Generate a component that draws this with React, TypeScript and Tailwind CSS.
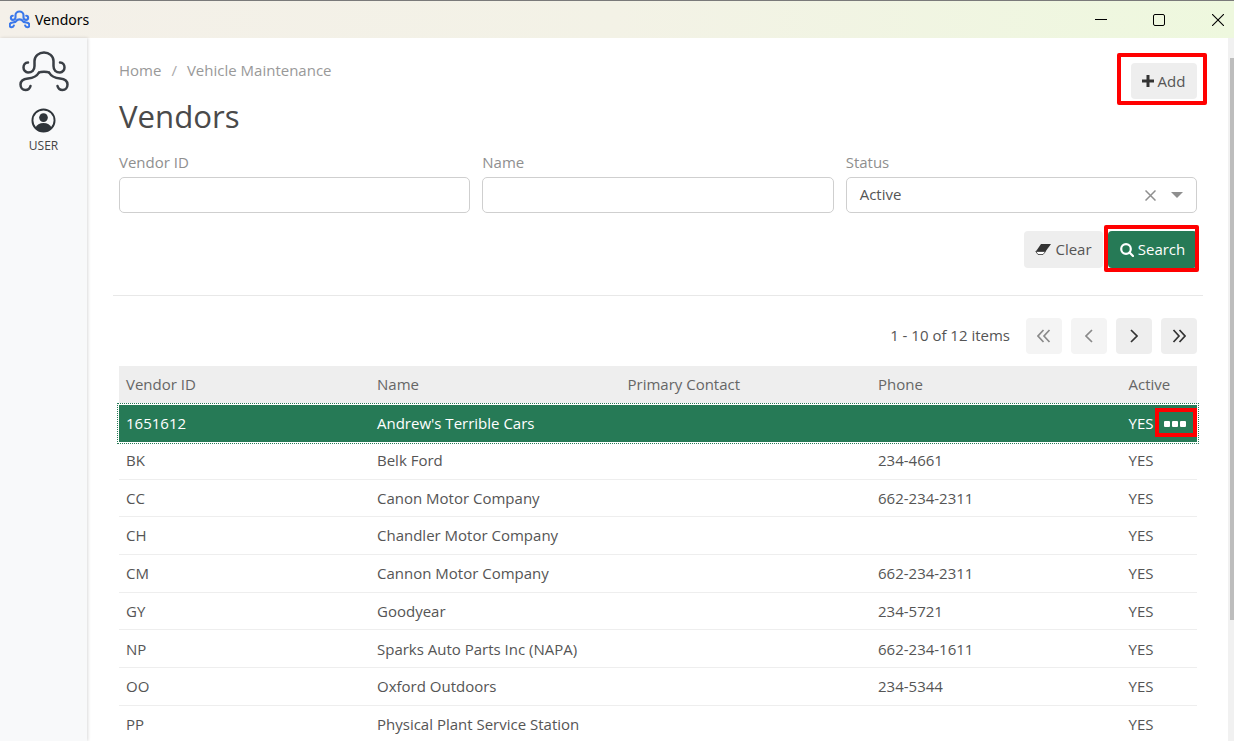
const rows = [
  { id: "BK", name: "Belk Ford", phone: "234-4661" },
  { id: "CC", name: "Canon Motor Company", phone: "662-234-2311" },
  { id: "CH", name: "Chandler Motor Company", phone: "" },
  { id: "CM", name: "Cannon Motor Company", phone: "662-234-2311" },
  { id: "GY", name: "Goodyear", phone: "234-5721" },
  { id: "NP", name: "Sparks Auto Parts Inc (NAPA)", phone: "662-234-1611" },
  { id: "OO", name: "Oxford Outdoors", phone: "234-5344" },
  { id: "PP", name: "Physical Plant Service Station", phone: "" },
];

function Octopus({ className, color, weight }: { className: string; color: string; weight: number }) {
  return (
    <svg viewBox="0 0 50 41" className={className} fill="none" stroke={color} strokeWidth={weight} strokeLinecap="round">
      {/* cabeca e bracos de cima */}
      <path d="M9 11.500C6 11.500 4.500 14 4.500 16.500C4.500 19 6.500 21.500 9 21.500C13 21.500 15.500 19 15.500 15V10C15.500 5 20 1.500 25 1.500C30 1.500 34.500 5 34.500 10V15C34.500 19 37 21.500 41 21.500C43.500 21.500 45.500 19 45.500 16.500C45.500 14 44 11.500 41 11.500" />
      {/* bracos de baixo */}
      <path d="M20 21.500C18 25 14 27 9 27.500C4.500 28 1.500 30 1.500 33.500C1.500 36.500 3.500 39 6.500 39C9 39 11 37 11.500 35" />
      <path d="M30 21.500C32 25 36 27 41 27.500C45.500 28 48.500 30 48.500 33.500C48.500 36.500 46.500 39 43.500 39C41 39 39 37 38.500 35" />
      <path d="M20 21.500C22 20.500 28 20.500 30 21.500" />
    </svg>
  );
}

function Field({ label, children }: { label: string; children?: React.ReactNode }) {
  return (
    <div className="flex-1">
      <div className="text-[15px] leading-[20px] text-[#8f8f8f] mb-[5px]">{label}</div>
      <div className="h-[36px] border border-[#cfcfcf] rounded-[5px] bg-white flex items-center px-[13px] text-[15px] text-[#555]">
        {children}
      </div>
    </div>
  );
}

function PageButton({ disabled, children }: { disabled?: boolean; children: React.ReactNode }) {
  return (
    <div className={`w-[36px] h-[36px] rounded-[4px] flex items-center justify-center ${disabled ? "bg-[#f4f4f4] text-[#8a8a8a]" : "bg-[#eeeeee] text-[#333]"}`}>
      {children}
    </div>
  );
}

function Chevron({ path, width }: { path: string; width: number }) {
  return (
    <svg viewBox={`0 0 ${width} 14`} width={width} height={14} fill="none" stroke="currentColor" strokeWidth="1.700">
      <path d={path} />
    </svg>
  );
}

const colunas = "grid grid-cols-[251px_250.5px_250.5px_250.5px_1fr] items-center";

export default function App() {
  return (
    <div className="h-screen w-full overflow-hidden flex flex-col bg-white font-['Open_Sans','Noto_Sans',sans-serif] text-[#555]">
      {/* BARRA DE TITULO */}
      <div className="h-[38px] shrink-0 border-t border-[#7a7a7a] bg-gradient-to-r from-[#f4f0e9] via-[#f3f2e6] to-[#eef8de] flex items-center justify-between">
        <div className="flex items-center">
          <Octopus className="w-[21px] h-[19px] ml-[9px] mr-[5px]" color="#3b78ea" weight={5} />
          <span className="text-[14px] text-black font-['Noto_Sans',sans-serif]">Vendors</span>
        </div>
        <div className="flex items-center">
          <div className="w-[12px] h-[1px] bg-black mr-[46px]" />
          <div className="w-[12px] h-[12px] border-[1.5px] border-black rounded-[2px] mr-[47px]" />
          <svg viewBox="0 0 12 12" className="w-[12px] h-[12px] mr-[10px]" stroke="#000" strokeWidth="1.100">
            <path d="M0 0L12 12M12 0L0 12" />
          </svg>
        </div>
      </div>

      <div className="flex-1 flex min-h-0">
        {/* MENU LATERAL */}
        <div className="w-[87px] shrink-0 bg-[#f8f9fa] shadow-[1px_0_3px_rgba(0,0,0,0.15)] flex flex-col items-center pt-[13px]">
          <Octopus className="w-[50px] h-[41px]" color="#3a3f45" weight={2.5} />
          <svg viewBox="0 0 26 26" className="w-[25px] h-[25px] mt-[16px]">
            <circle cx="13" cy="13" r="11.500" fill="none" stroke="#2f353a" strokeWidth="2" />
            <circle cx="13" cy="10" r="4.500" fill="#2f353a" />
            <path d="M4.500 20.500C6 17 9 15.500 13 15.500s7 1.500 8.500 5C19 23.500 16 24.500 13 24.500s-6-1-8.500-4z" fill="#2f353a" />
          </svg>
          <span className="text-[12px] leading-[16px] mt-[5px] text-[#444]">USER</span>
        </div>

        {/* CONTEUDO */}
        <div className="flex-1 min-w-0 pl-[26px] pr-[25px] pt-[14px]">
          <div className="flex justify-between items-start px-[6px]">
            <div>
              <div className="text-[15px] leading-[36px] text-[#999] flex">
                <span>Home</span>
                <span className="mx-[10px] text-[#aaa]">/</span>
                <span>Vehicle Maintenance</span>
              </div>
              <h1 className="text-[31.2px] leading-[44px] mt-[6px] text-[#4a4a4a]">Vendors</h1>
            </div>
            <div className="relative mt-[11px]">
              <div className="h-[36px] w-[66px] rounded-[4px] bg-[#eeeeee] text-[#555] text-[15px] flex items-center justify-center gap-[4px] pr-[1px]">
                <svg viewBox="0 0 12 12" className="w-[12px] h-[12px]" fill="#333">
                  <path d="M4.500 0h3v4.500H12v3H7.500V12h-3V7.500H0v-3h4.500z" />
                </svg>
                <span>Add</span>
              </div>
              <div className="absolute -left-[14px] -right-[10px] -top-[10px] -bottom-[6px] border-[4px] border-[#ff0000] rounded-[2px]" />
            </div>
          </div>

          {/* FILTROS */}
          <div className="flex gap-[12px] px-[6px] mt-[14px]">
            <Field label="Vendor ID" />
            <Field label="Name" />
            <Field label="Status">
              <span className="flex-1 pb-[2px]">Active</span>
              <svg viewBox="0 0 11 11" className="w-[11px] h-[11px] mr-[15px]" stroke="#8f8f8f" strokeWidth="1.500">
                <path d="M0.500 0.500L10.500 10.500M10.500 0.500L0.500 10.500" />
              </svg>
              <div className="w-0 h-0 border-x-[6px] border-x-transparent border-t-[6px] border-t-[#8f8f8f]" />
            </Field>
          </div>

          <div className="flex justify-end gap-[5px] px-[6px] mt-[18px] pb-[27px] border-b border-[#e8e8e8]">
            <div className="h-[37px] w-[79px] rounded-[4px] bg-[#eeeeee] text-[15px] flex items-center justify-center gap-[4px]">
              <svg viewBox="0 0 16 11" className="w-[16px] h-[11px]">
                <path d="M6 0H16L10.500 7.500H0.800z" fill="#333" />
                <path d="M0.800 7.500H10.500L8 10.500H3z" fill="#fff" stroke="#333" strokeWidth="0.800" />
              </svg>
              <span>Clear</span>
            </div>
            <div className="relative">
              <div className="h-[37px] w-[89px] rounded-[4px] bg-[#267a56] text-white text-[15px] flex items-center justify-center gap-[4px]">
                <svg viewBox="0 0 14 14" className="w-[14px] h-[14px]" fill="none" stroke="#fff" strokeWidth="2.200">
                  <circle cx="6" cy="6" r="4.800" />
                  <path d="M9.500 9.500L13 13" strokeLinecap="round" />
                </svg>
                <span>Search</span>
              </div>
              <div className="absolute -left-[4px] -right-[2px] -top-[6px] -bottom-[4px] border-[4px] border-[#ff0000] rounded-[2px]" />
            </div>
          </div>

          {/* PAGINACAO */}
          <div className="flex justify-end items-center gap-[9px] px-[6px] mt-[22px]">
            <span className="text-[15px] mr-[7px] pb-[2px]">1 - 10 of 12 items</span>
            <PageButton disabled><Chevron width={14} path="M6.500 1L1 7l5.500 6M12.500 1L7 7l5.500 6" /></PageButton>
            <PageButton disabled><Chevron width={8} path="M7 1L1 7l6 6" /></PageButton>
            <PageButton><Chevron width={8} path="M1 1l6 6-6 6" /></PageButton>
            <PageButton><Chevron width={14} path="M1.500 1L7 7l-5.500 6M7.500 1L13 7l-5.500 6" /></PageButton>
          </div>

          {/* TABELA */}
          <div className="mx-[6px] mt-[12px] text-[15px]">
            <div className={`h-[37px] bg-[#eeeeee] text-[#666] ${colunas}`}>
              <span className="pl-[7px]">Vendor ID</span>
              <span className="pl-[7px]">Name</span>
              <span className="pl-[7px]">Primary Contact</span>
              <span className="pl-[7px]">Phone</span>
              <span className="pl-[7px]">Active</span>
            </div>
            <div className={`relative h-[37px] mt-[2px] bg-[#267a56] text-white font-medium outline-1 outline-offset-1 outline-dotted outline-[#267a56] ${colunas}`}>
              <span className="pl-[7px] font-normal">1651612</span>
              <span className="pl-[7px]">Andrew's Terrible Cars</span>
              <span />
              <span />
              <span className="pl-[7px] font-normal">YES</span>
              <div className="absolute right-0 top-[3px] w-[42px] h-[29px] border-[4px] border-[#ff0000] flex items-center justify-center gap-[1.5px] pt-[3px] pr-[2px]">
                <div className="w-[6.5px] h-[6.5px] bg-white rounded-[1px]" />
                <div className="w-[6.5px] h-[6.5px] bg-white rounded-[1px]" />
                <div className="w-[6.5px] h-[6.5px] bg-white rounded-[1px]" />
              </div>
            </div>
            {rows.map((row) => (
              <div key={row.id} className={`h-[37.7px] border-b border-[#eeeeee] ${colunas}`}>
                <span className="pl-[7px]">{row.id}</span>
                <span className="pl-[7px]">{row.name}</span>
                <span />
                <span className="pl-[7px]">{row.phone}</span>
                <span className="pl-[7px]">YES</span>
              </div>
            ))}
          </div>
        </div>

        {/* BARRA DE ROLAGEM */}
        <div className="w-[6px] shrink-0 bg-[#f1f1f1]">
          <div className="mt-[20px] ml-[2px] h-[562px] w-[4px] bg-[#bdbdbd]" />
        </div>
      </div>
    </div>
  );
}
